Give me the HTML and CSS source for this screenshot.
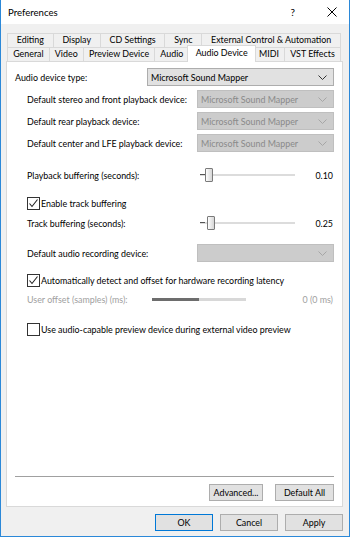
FILE: index.html
```html
<!DOCTYPE html>
<html lang="en">
<head>
    <meta charset="utf-8" />
    <meta name="viewport" content="width=device-width, initial-scale=1" />
    <title>Preferences</title>
    <link rel="stylesheet" href="styles.css">
</head>
<body>

<div class="window">
    <div class="titlebar">
        <span class="title">Preferences</span>
        <span class="help">?</span>
        <svg class="close" width="10" height="10" viewBox="0 0 10 10">
            <path d="M0.5 0.5 L9.5 9.5 M9.5 0.5 L0.5 9.5" stroke="#000" stroke-width="1" fill="none"/>
        </svg>
    </div>

    <div class="client">
        <div class="tabs">
            <div class="tab-row">
                <div class="tab">Editing</div>
                <div class="tab">Display</div>
                <div class="tab">CD Settings</div>
                <div class="tab">Sync</div>
                <div class="tab">External Control &amp; Automation</div>
            </div>
            <div class="tab-row">
                <div class="tab">General</div>
                <div class="tab">Video</div>
                <div class="tab">Preview Device</div>
                <div class="tab">Audio</div>
                <div class="tab active">Audio Device</div>
                <div class="tab">MIDI</div>
                <div class="tab">VST Effects</div>
            </div>
        </div>

        <div class="panel">
            <div class="row row-first">
                <span class="label">Audio device type:</span>
                <div class="combo">
                    <span>Microsoft Sound Mapper</span>
                    <svg class="chev" width="9" height="5" viewBox="0 0 9 5"><path d="M0.5 0.5 L4.5 4.5 L8.5 0.5" stroke="#333" fill="none"/></svg>
                </div>
            </div>
            <div class="row row-sub">
                <span class="label indent">Default stereo and front playback device:</span>
                <div class="combo disabled">
                    <span>Microsoft Sound Mapper</span>
                    <svg class="chev" width="9" height="5" viewBox="0 0 9 5"><path d="M0.5 0.5 L4.5 4.5 L8.5 0.5" stroke="#a6a6a6" fill="none"/></svg>
                </div>
            </div>
            <div class="row row-sub">
                <span class="label indent">Default rear playback device:</span>
                <div class="combo disabled">
                    <span>Microsoft Sound Mapper</span>
                    <svg class="chev" width="9" height="5" viewBox="0 0 9 5"><path d="M0.5 0.5 L4.5 4.5 L8.5 0.5" stroke="#a6a6a6" fill="none"/></svg>
                </div>
            </div>
            <div class="row row-sub">
                <span class="label indent">Default center and LFE playback device:</span>
                <div class="combo disabled">
                    <span>Microsoft Sound Mapper</span>
                    <svg class="chev" width="9" height="5" viewBox="0 0 9 5"><path d="M0.5 0.5 L4.5 4.5 L8.5 0.5" stroke="#a6a6a6" fill="none"/></svg>
                </div>
            </div>

            <div class="row row-slider gap-first">
                <span class="label indent">Playback buffering (seconds):</span>
                <div class="slider">
                    <div class="track"></div>
                    <div class="thumb thumb-a"></div>
                </div>
                <span class="value">0.10</span>
            </div>

            <div class="row row-check gap-mid">
                <span class="check">
                    <svg width="11" height="11" viewBox="0 0 11 11"><path d="M1.5 5.5 L4 8.5 L9.5 1.5" stroke="#222" stroke-width="1.1" fill="none"/></svg>
                </span>
                <span>Enable track buffering</span>
            </div>

            <div class="row row-slider gap-small">
                <span class="label indent">Track buffering (seconds):</span>
                <div class="slider">
                    <div class="track"></div>
                    <div class="thumb thumb-b"></div>
                </div>
                <span class="value">0.25</span>
            </div>

            <div class="row row-sub gap-big">
                <span class="label indent">Default audio recording device:</span>
                <div class="combo disabled">
                    <span></span>
                    <svg class="chev" width="9" height="5" viewBox="0 0 9 5"><path d="M0.5 0.5 L4.5 4.5 L8.5 0.5" stroke="#a6a6a6" fill="none"/></svg>
                </div>
            </div>

            <div class="row row-check gap-mid">
                <span class="check">
                    <svg width="11" height="11" viewBox="0 0 11 11"><path d="M1.5 5.5 L4 8.5 L9.5 1.5" stroke="#222" stroke-width="1.1" fill="none"/></svg>
                </span>
                <span>Automatically detect and offset for hardware recording latency</span>
            </div>

            <div class="row row-slider gap-tiny muted">
                <span class="label indent offset-label">User offset (samples) (ms):</span>
                <div class="offset-track">
                    <div class="offset-fill"></div>
                </div>
                <span class="value">0 (0 ms)</span>
            </div>

            <div class="row row-check gap-last">
                <span class="check"></span>
                <span>Use audio-capable preview device during external video preview</span>
            </div>

            <div class="spacer"></div>
            <div class="separator"></div>
            <div class="panel-buttons">
                <button class="btn btn-adv">Advanced...</button>
                <button class="btn btn-def">Default All</button>
            </div>
        </div>

        <div class="dialog-buttons">
            <button class="btn btn-main default">OK</button>
            <button class="btn btn-main">Cancel</button>
            <button class="btn btn-main">Apply</button>
        </div>
    </div>
</div>

</body>
</html>
```

FILE: styles.css
```css
* {
    margin: 0;
    padding: 0;
    box-sizing: border-box;
}

html, body {
    width: 100%;
    height: 100%;
}

body {
    overflow: hidden;
    background-color: #f0f0f0;
    font-family: Lato, "Liberation Sans", sans-serif;
    font-size: 8.9px;
    color: #000;
}

.window {
    display: flex;
    flex-direction: column;
    width: 350px;
    height: 537px;
    border: 1px solid #2b88d8;
    border-top: none;
    background-color: #f0f0f0;
}

.titlebar {
    display: flex;
    align-items: center;
    height: 24px;
    background-color: #fff;
    padding-left: 7px;
}

.title {
    flex: 1;
    font-size: 9.6px;
}

.help {
    font-size: 10px;
    margin-right: 32px;
}

.close {
    margin-right: 12px;
}

.client {
    display: flex;
    flex-direction: column;
    flex: 1;
    padding: 9px 6px 5px 5px;
}

.tabs {
    display: flex;
    flex-direction: column;
    padding: 0 2px 0 1px;
    position: relative;
    z-index: 1;
}

.tab-row {
    display: flex;
    height: 14px;
}

.tab {
    flex: auto;
    display: flex;
    align-items: center;
    justify-content: center;
    border: 1px solid #d9d9d9;
    border-bottom: none;
    margin-left: -1px;
    background-color: #f0f0f0;
    white-space: nowrap;
    line-height: 1;
}

.tab:first-child {
    margin-left: 0;
}

.tab.active {
    background-color: #fff;
    margin: -2px -2px -1px -2px;
    height: 17px;
    padding: 0 2px 2px 2px;
    position: relative;
    z-index: 2;
}

.panel {
    display: flex;
    flex-direction: column;
    flex: 1;
    background-color: #fff;
    border: 1px solid #d9d9d9;
    padding: 6px 8px 5px 8px;
}

.row {
    display: flex;
    align-items: center;
    white-space: nowrap;
}

.row-first {
    height: 18px;
}

.row-sub {
    height: 18px;
    margin-top: 4px;
}

.row-slider {
    height: 20px;
}

.row-check {
    height: 16px;
}

.gap-first {
    margin-top: 13px;
}

.gap-big {
    margin-top: 11px;
}

.gap-last {
    margin-top: 12px;
}

.gap-mid {
    margin-top: 10px;
}

.gap-small {
    margin-top: 2px;
}

.gap-tiny {
    margin-top: 1px;
}

.label {
    width: 132px;
}

.label.indent {
    width: 182px;
    padding-left: 12px;
}

.combo {
    display: flex;
    align-items: center;
    justify-content: space-between;
    height: 18px;
    flex: 1;
    padding: 0 6px 0 3px;
    background-color: #e1e1e1;
    border: 1px solid #adadad;
}

.combo.disabled {
    background-color: #cccccc;
    border-color: #bfbfbf;
    color: #8a8a8a;
}

.slider {
    position: relative;
    width: 95px;
    height: 20px;
    margin-left: 3px;
}

.track {
    position: absolute;
    left: 0;
    right: 0;
    top: 9px;
    height: 2px;
    background-color: #dcdcdc;
}

.track::before {
    content: "";
    position: absolute;
    left: 0;
    top: 0;
    width: 5px;
    height: 1px;
    background-color: #555;
}

.thumb {
    position: absolute;
    top: 3px;
    width: 8px;
    height: 14px;
    border: 1px solid #7a7a7a;
    border-radius: 1px;
    background: linear-gradient(to right, #fdfdfd, #d6d6d6);
}

.thumb-a {
    left: 5px;
}

.thumb-b {
    left: 7px;
}

.value {
    flex: 1;
    text-align: right;
    padding-right: 1px;
}

.check {
    display: flex;
    align-items: center;
    justify-content: center;
    width: 13px;
    height: 13px;
    margin-left: 12px;
    margin-right: 1px;
    border: 1px solid #333;
    background-color: #fff;
}

.muted {
    color: #a0a0a0;
}

.label.offset-label {
    width: 137px;
}

.offset-track {
    width: 94px;
    height: 3px;
    background-color: #d8d8d8;
}

.offset-fill {
    width: 47px;
    height: 3px;
    background-color: #6d6d6d;
}

.spacer {
    flex: 1;
}

.separator {
    height: 1px;
    background-color: #a0a0a0;
    margin-bottom: 7px;
}

.panel-buttons {
    display: flex;
    justify-content: flex-end;
    gap: 12px;
}

.btn {
    height: 17px;
    font-family: inherit;
    font-size: 8.9px;
    background-color: #e1e1e1;
    border: 1px solid #adadad;
    color: #000;
}

.btn-adv {
    width: 54px;
}

.btn-def {
    width: 59px;
}

.dialog-buttons {
    display: flex;
    justify-content: flex-end;
    gap: 7px;
    margin-top: 7px;
}

.btn-main {
    width: 58px;
}

.btn-main.default {
    border-color: #0078d7;
}
```
